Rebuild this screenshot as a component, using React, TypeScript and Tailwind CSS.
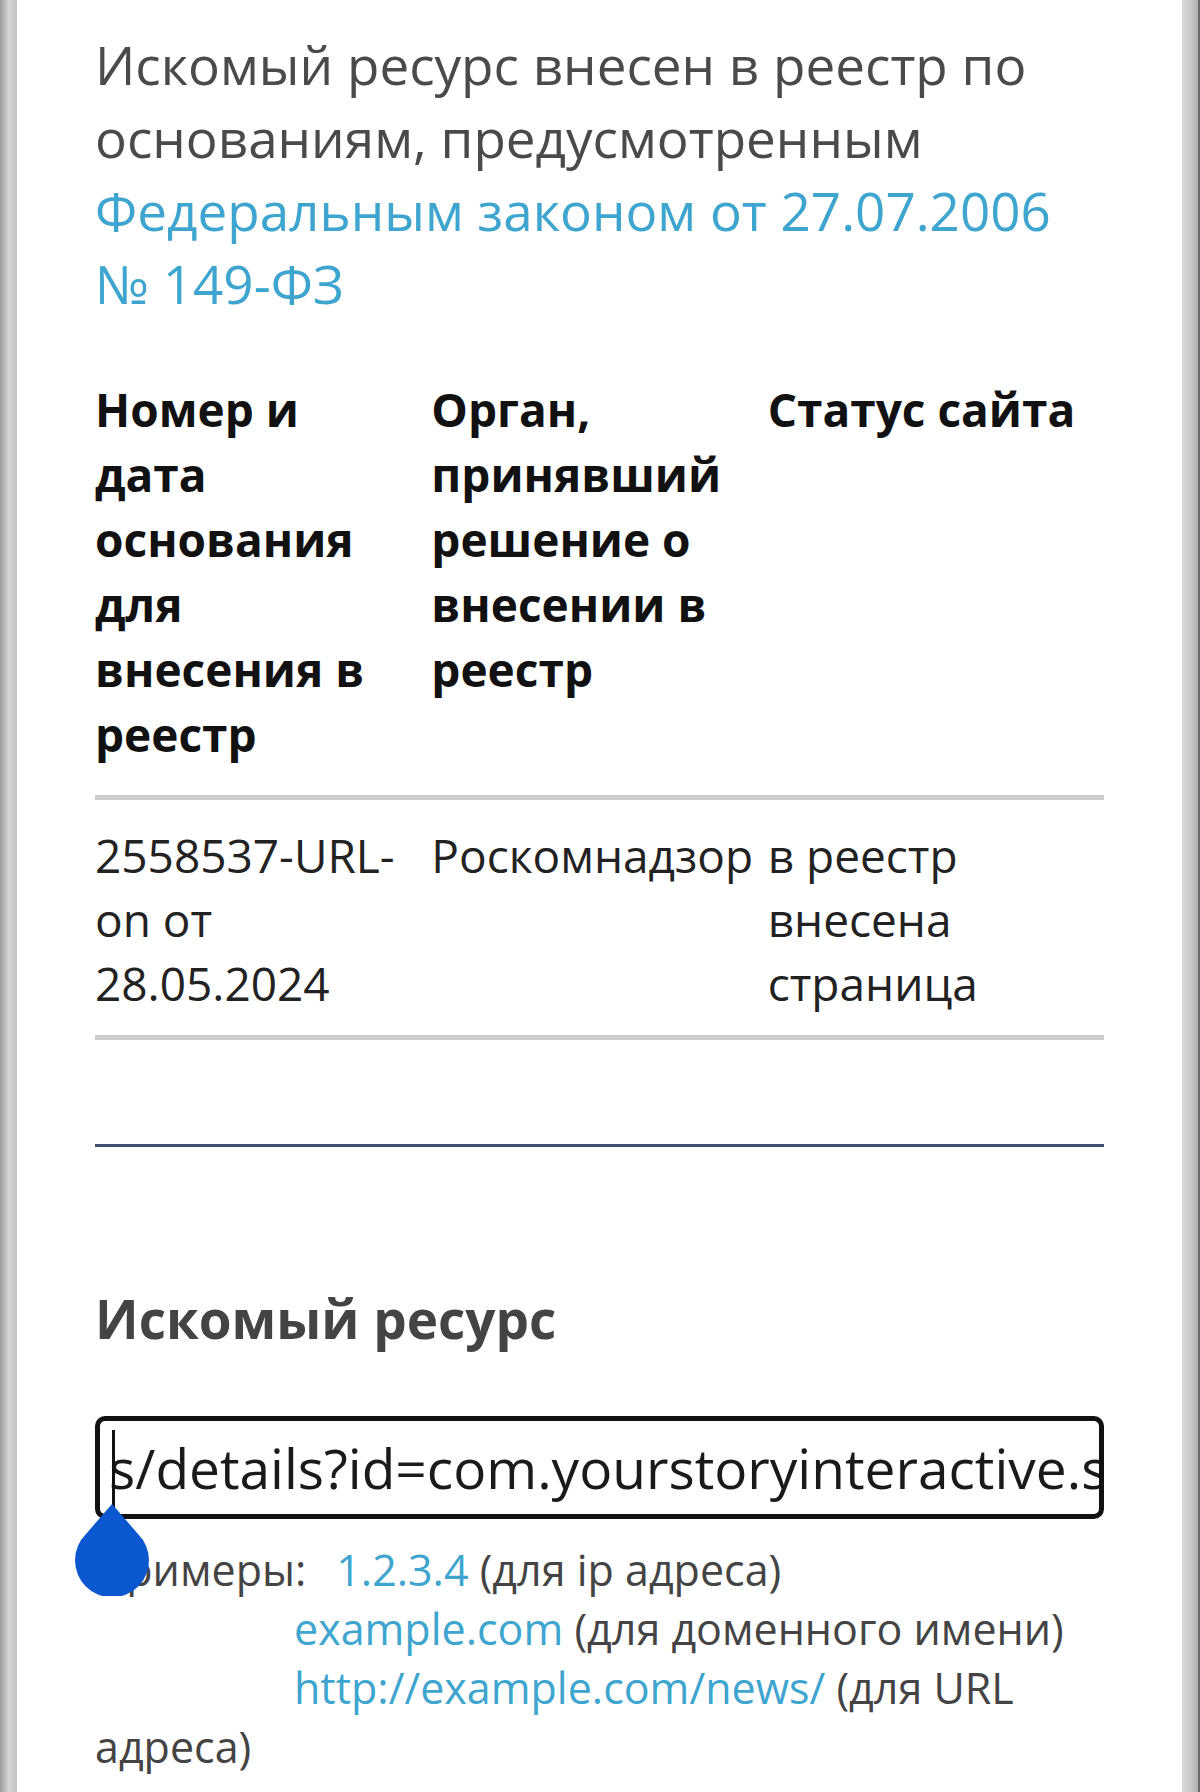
export default function App() {
  return (
    <div
      className="flex h-[1792px] w-[1200px] overflow-hidden bg-white"
      style={{ fontFamily: '"Open Sans", "Noto Sans", sans-serif' }}
    >
      {/* left frame edge */}
      <div className="w-[17px] shrink-0 bg-gradient-to-r from-[#9a9a9a] via-[#d4d4d4] to-[#c2c2c2]" />

      <main className="min-w-0 flex-1 px-[78px] pt-[28px]">
        <p className="text-[53px] leading-[73px] text-[#4a4a4a]">
          Искомый ресурс внесен в реестр по основаниям, предусмотренным{" "}
          <a className="text-[#3ea5cf]">Федеральным законом от 27.07.2006 №&nbsp;149-ФЗ</a>
        </p>

        <table className="mt-[57px] w-full table-fixed border-collapse text-left">
          <thead>
            <tr className="border-b-[5px] border-[#cdcdcd]">
              <th className="pb-[28px] pr-[16px] align-top text-[46px] font-bold leading-[65px] text-[#111]">
                Номер и дата основания для внесения в реестр
              </th>
              <th className="pb-[28px] pr-[16px] align-top text-[46px] font-bold leading-[65px] text-[#111]">
                Орган, принявший решение о внесении в реестр
              </th>
              <th className="pb-[28px] align-top text-[46px] font-bold leading-[65px] text-[#111]">
                Статус сайта
              </th>
            </tr>
          </thead>
          <tbody>
            <tr className="border-b-[5px] border-[#cdcdcd]">
              <td className="pb-[20px] pr-[16px] pt-[23px] align-top text-[46px] leading-[64px] text-[#222]">
                2558537-URL-on от 28.05.2024
              </td>
              <td className="pb-[20px] pr-[4px] pt-[23px] align-top text-[46px] leading-[64px] text-[#222]">
                Роскомнадзор
              </td>
              <td className="pb-[20px] pt-[23px] align-top text-[46px] leading-[64px] text-[#222]">
                в реестр внесена страница
              </td>
            </tr>
          </tbody>
        </table>

        <div className="mt-[104px] h-[3px] bg-[#3f5075]" />

        <h2 className="mt-[140px] text-[53px] font-bold leading-[64px] text-[#444]">Искомый ресурс</h2>

        <div className="relative mt-[65px]">
          <div className="flex h-[103px] min-w-0 items-center overflow-hidden rounded-[10px] border-[5px] border-[#111] pl-[14px] pr-[6px]">
            <span className="-ml-[5px] shrink-0 whitespace-nowrap text-[55px] leading-none text-[#1a1a1a]">
              s/details?id=com.yourstoryinteractive.sa
            </span>
          </div>
          <span className="absolute left-[17px] top-[14px] h-[80px] w-[3px] bg-[#111]" />

          {/* text selection handle */}
          <svg
            className="absolute left-[-21px] top-[88px] z-10"
            width="80"
            height="92"
            viewBox="0 0 80 92"
          >
            <path d="M38 0 L64 30 A37 37 0 1 1 12 30 Z" fill="#0b57d0" />
          </svg>
        </div>

        <p className="mt-[21px] text-[43px] leading-[59px] text-[#444]">
          Примеры:<span className="inline-block w-[30px]" />
          <a className="text-[#3ea5cf]">1.2.3.4</a> (для ip адреса)
          <br />
          <span className="inline-block w-[199px]" />
          <a className="text-[#3ea5cf]">example.com</a> (для доменного имени)
          <br />
          <span className="inline-block w-[199px]" />
          <a className="text-[#3ea5cf]">http://example.com/news/</a> (для URL адреса)
        </p>
      </main>

      {/* right frame edge */}
      <div className="w-[16px] shrink-0 bg-gradient-to-r from-[#dadada] via-[#cccccc] to-[#b0b0b0]" />
      <div className="w-[2px] shrink-0 bg-[#6a6a6a]" />
    </div>
  );
}
